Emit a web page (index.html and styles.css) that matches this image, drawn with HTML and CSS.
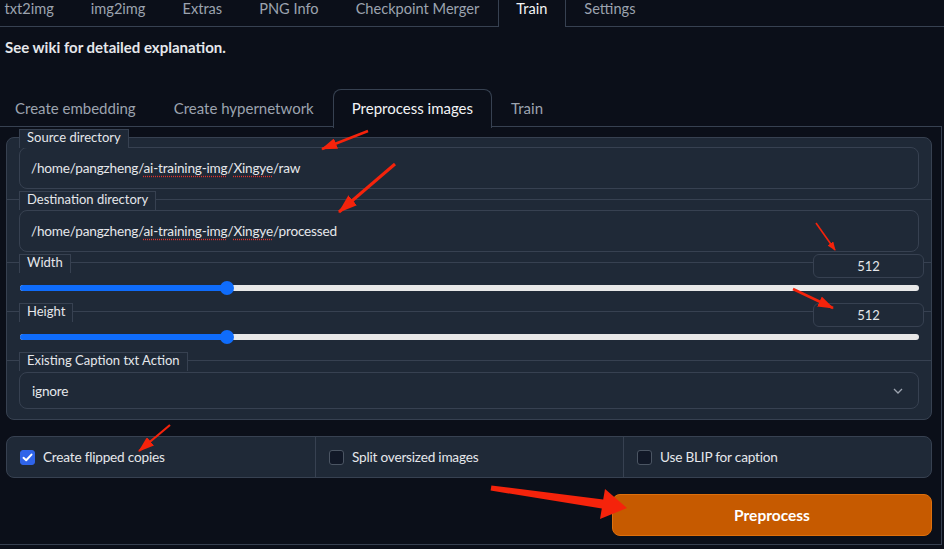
FILE: index.html
```html
<!DOCTYPE html>
<html lang="en">
<head>
<meta charset="utf-8">
<title>Train - Preprocess images</title>
<link rel="stylesheet" href="styles.css">
</head>
<body>
<nav class="top-tabs">
  <span class="tab">txt2img</span>
  <span class="tab">img2img</span>
  <span class="tab">Extras</span>
  <span class="tab">PNG Info</span>
  <span class="tab">Checkpoint Merger</span>
  <span class="tab active">Train</span>
  <span class="tab">Settings</span>
</nav>
<p class="wiki">See wiki for detailed explanation.</p>
<section class="sub">
  <nav class="sub-tabs">
    <span class="stab">Create embedding</span>
    <span class="stab">Create hypernetwork</span>
    <span class="stab active">Preprocess images</span>
    <span class="stab">Train</span>
  </nav>
  <div class="sub-body">
    <div class="panel">
      <div class="block first">
        <span class="blabel">Source directory</span>
        <div class="field">/home/pangzheng/<span class="sp">ai-training-img</span>/<span class="sp">Xingye</span>/raw</div>
      </div>
      <div class="block">
        <span class="blabel">Destination directory</span>
        <div class="field">/home/pangzheng/<span class="sp">ai-training-img</span>/<span class="sp">Xingye</span>/processed</div>
      </div>
      <div class="block slider-block">
        <span class="blabel">Width</span>
        <span class="num">512</span>
        <div class="track"><div class="fill" style="width:23%"></div><span class="thumb" style="left:23%"></span></div>
      </div>
      <div class="block slider-block">
        <span class="blabel">Height</span>
        <span class="num">512</span>
        <div class="track"><div class="fill" style="width:23%"></div><span class="thumb" style="left:23%"></span></div>
      </div>
      <div class="block drop-block">
        <span class="blabel">Existing Caption txt Action</span>
        <div class="select">
          <span>ignore</span>
          <svg class="chev" width="10" height="6" viewBox="0 0 10 6"><path d="M1 1 L5 5 L9 1" fill="none" stroke="#9ca3af" stroke-width="1.3"/></svg>
        </div>
      </div>
    </div>
    <div class="checks">
      <label class="chk"><span class="box on"><svg width="11" height="9" viewBox="0 0 11 9"><path d="M1.5 4.8 L4.2 7.2 L9.5 1.6" fill="none" stroke="#fff" stroke-width="2" stroke-linecap="round" stroke-linejoin="round"/></svg></span>Create flipped copies</label>
      <label class="chk"><span class="box"></span>Split oversized images</label>
      <label class="chk"><span class="box"></span>Use BLIP for caption</label>
    </div>
    <div class="actions">
      <button class="run">Preprocess</button>
    </div>
  </div>
</section>
<svg class="marks" width="944" height="549" viewBox="0 0 944 549">
  <defs>
    <marker id="h1" markerUnits="userSpaceOnUse" markerWidth="16" markerHeight="11" refX="15" refY="5.5" orient="auto"><path d="M0 0 L16 5.5 L0 11 Z" fill="#f5230b"/></marker>
    <marker id="h2" markerUnits="userSpaceOnUse" markerWidth="19" markerHeight="13" refX="18" refY="6.5" orient="auto"><path d="M0 0 L19 6.5 L0 13 Z" fill="#f5230b"/></marker>
    <marker id="h3" markerUnits="userSpaceOnUse" markerWidth="9" markerHeight="7" refX="8" refY="3.5" orient="auto"><path d="M0 0 L9 3.5 L0 7 Z" fill="#f5230b"/></marker>
  </defs>
  <line x1="368" y1="131" x2="322" y2="149" stroke="#f5230b" stroke-width="2.5" marker-end="url(#h1)"/>
  <line x1="395" y1="164" x2="339" y2="212" stroke="#f5230b" stroke-width="3" marker-end="url(#h2)"/>
  <line x1="816" y1="223" x2="835" y2="250" stroke="#f5230b" stroke-width="1.6" marker-end="url(#h3)"/>
  <line x1="793" y1="289" x2="833" y2="308" stroke="#f5230b" stroke-width="2.5" marker-end="url(#h1)"/>
  <line x1="170" y1="425" x2="139" y2="451" stroke="#f5230b" stroke-width="2.2" marker-end="url(#h1)"/>
  <polygon points="491.4,485.5 603.2,499.5 605,489 627,508 600,519 601.8,508.5 490.6,490.5" fill="#f5230b"/>
</svg>
</body>
</html>
```
FILE: styles.css
```css
* { box-sizing: border-box; }
html, body { margin: 0; padding: 0; }
body {
  width: 944px;
  height: 549px;
  overflow: hidden;
  position: relative;
  background: #0b0f19;
  color: #e5e7eb;
  font-family: "Lato", "Noto Sans", sans-serif;
}

.top-tabs {
  display: flex;
  height: 27px;
  margin-left: -14px;
  border-bottom: 1px solid #374151;
}
.tab {
  padding: 0 17.5px;
  line-height: 18px;
  height: 27px;
  font-size: 14.6px;
  color: #9ca3af;
  border: 1px solid transparent;
  border-top: 0;
  border-bottom: 0;
}
.tab.active {
  color: #f3f4f6;
  border-color: #374151;
  background: #0b0f19;
  margin-bottom: -1px;
}

.wiki {
  margin: 10px 0 0 5px;
  line-height: 21px;
  font-size: 15px;
  font-weight: 700;
  color: #e5e7eb;
}

.sub {
  margin: 31px 0 0 -4px;
  width: 946px;
}
.sub-tabs {
  display: flex;
  height: 38px;
  border-bottom: 1px solid #374151;
}
.stab {
  padding: 8px 18px;
  line-height: 21px;
  font-size: 15px;
  color: #9ca3af;
  border: 1px solid transparent;
  border-bottom: 0;
  border-radius: 8px 8px 0 0;
}
.stab.active {
  color: #f3f4f6;
  border-color: #374151;
  background: #0b0f19;
  height: 39px;
  margin-bottom: -1px;
}

.sub-body {
  border: 1px solid #374151;
  border-top: 0;
  padding: 10px 9px 8px;
  display: flex;
  flex-direction: column;
  gap: 16px;
}

.panel {
  background: #1f2937;
  border: 1px solid #374151;
  border-radius: 8px;
  display: flex;
  flex-direction: column;
}
.block {
  position: relative;
  border-top: 1px solid #374151;
  padding: 10px 12px;
}
.block.first {
  border-top: 0;
  padding-top: 9px;
}
.blabel {
  position: absolute;
  top: -9px;
  left: 12px;
  height: 19px;
  line-height: 15px;
  padding: 0 7px;
  font-size: 13px;
  color: #e5e7eb;
  background: #1f2937;
  border: 1px solid #374151;
  border-bottom: 0;
}
.field {
  height: 42px;
  border: 1px solid #374151;
  border-radius: 8px;
  padding: 0 11px;
  line-height: 40px;
  font-size: 13.6px;
  letter-spacing: -0.2px;
  color: #e5e7eb;
  white-space: nowrap;
}
.sp {
  text-decoration: underline dotted #e0342c;
  text-underline-offset: 3px;
}

.slider-block {
  padding: 18px 12px 16px 13px;
}
.num {
  position: absolute;
  top: -9px;
  right: 7px;
  width: 111px;
  height: 24px;
  line-height: 22px;
  text-align: center;
  font-size: 13px;
  color: #e5e7eb;
  background: #1f2937;
  border: 1px solid #374151;
  border-radius: 6px;
}
.track {
  position: relative;
  height: 14px;
  display: flex;
  align-items: center;
}
.track::before {
  content: "";
  position: absolute;
  left: 0;
  right: 0;
  top: 4px;
  height: 6px;
  border-radius: 3px;
  background: #e8e8e8;
}
.fill {
  position: relative;
  height: 6px;
  border-radius: 3px;
  background: #0f6cfb;
}
.thumb {
  position: absolute;
  top: 0;
  width: 14px;
  height: 14px;
  margin-left: -7px;
  border-radius: 50%;
  background: #0f6cfb;
}

.drop-block {
  padding: 11px 12px 10px;
}
.select {
  height: 37px;
  border: 1px solid #374151;
  border-radius: 8px;
  padding: 0 15px 0 12px;
  display: flex;
  align-items: center;
  justify-content: space-between;
  font-size: 13.6px;
  letter-spacing: -0.2px;
  color: #e5e7eb;
}

.checks {
  display: grid;
  grid-template-columns: repeat(3, 1fr);
  height: 42px;
  background: #1f2937;
  border: 1px solid #374151;
  border-radius: 8px;
}
.chk {
  display: flex;
  align-items: center;
  gap: 8px;
  padding: 0 13px;
  font-size: 13.6px;
  letter-spacing: -0.2px;
  color: #e5e7eb;
  border-left: 1px solid #374151;
}
.chk:first-child { border-left: 0; }
.box {
  width: 15px;
  height: 15px;
  border-radius: 3px;
  border: 1px solid #4b5563;
  background: #111827;
  display: flex;
  align-items: center;
  justify-content: center;
}
.box.on {
  background: #2f64e9;
  border-color: #2f64e9;
}

.actions {
  display: flex;
  justify-content: flex-end;
}
.run {
  width: 320px;
  height: 42px;
  border: 1px solid #de6f0c;
  border-radius: 8px;
  background: #c65a00;
  color: #fff;
  font-family: inherit;
  font-size: 15.5px;
  font-weight: 700;
}

.marks {
  position: absolute;
  left: 0;
  top: 0;
  pointer-events: none;
}
```
